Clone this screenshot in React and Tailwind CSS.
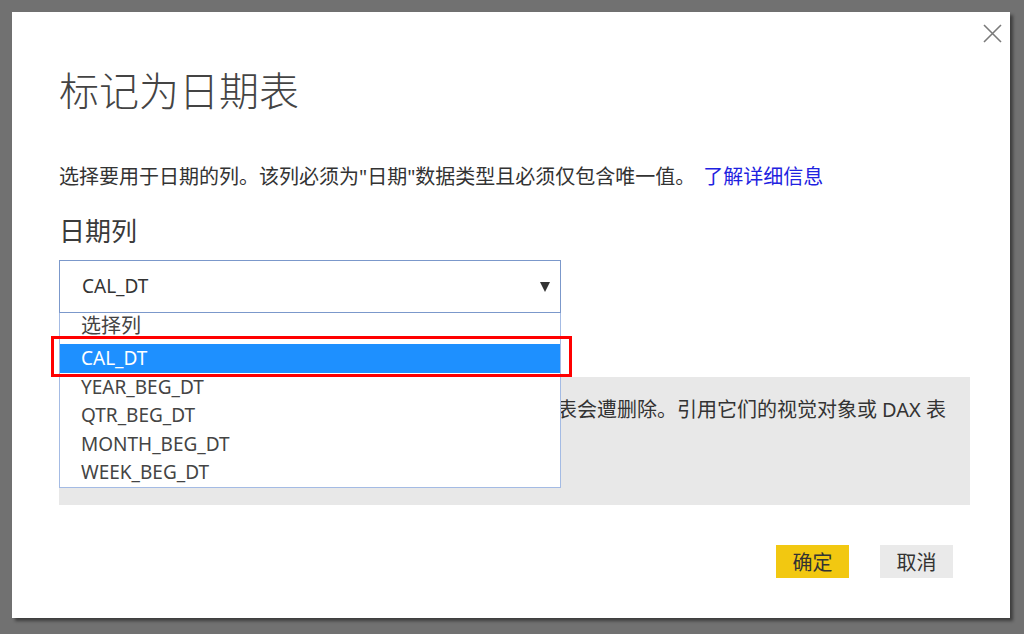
import React from "react";

const items = ["选择列", "CAL_DT", "YEAR_BEG_DT", "QTR_BEG_DT", "MONTH_BEG_DT", "WEEK_BEG_DT"];

function CloseIcon() {
  return (
    <svg width="19" height="19" viewBox="0 0 19 19" fill="none">
      <path d="M1 1L18 18M18 1L1 18" stroke="#7a7a7a" strokeWidth="1.6" />
    </svg>
  );
}

export default function App() {
  return (
    <div className="w-[1024px] h-[634px] bg-[#717171] pt-[12px] pl-[12px] overflow-hidden">
      <div className="relative w-[998px] h-[606px] bg-white shadow-[3px_3px_3px_rgba(0,0,0,0.45)] pl-[47px] pr-[40px] pt-[55px] text-[#333] font-['Noto_Sans','Noto_Sans_CJK_SC',sans-serif]">
        <button className="absolute right-[8px] top-[12px] w-[19px] h-[19px]">
          <CloseIcon />
        </button>

        <h1 className="text-[40px] leading-[48px] font-light text-[#444]">标记为日期表</h1>

        <p className="mt-[48px] text-[20px] leading-[28px] whitespace-nowrap">
          选择要用于日期的列。该列必须为"日期"数据类型且必须仅包含唯一值。
          <a className="ml-[8px] text-[#1e22e0]">了解详细信息</a>
        </p>

        <div className="mt-[23px] text-[26px] leading-[34px] text-[#3a3a3a]">日期列</div>

        <div className="relative mt-[12px] w-[502px] z-10">
          <div className="h-[53px] border border-[#7b98cb] flex items-center justify-between pl-[22px] pr-[10px] text-[19px]">
            <span>CAL_DT</span>
            <svg width="10" height="10" viewBox="0 0 10 10">
              <polygon points="0,0 10,0 5,10" fill="#333" />
            </svg>
          </div>
          <div className="absolute left-0 top-full w-[502px] border border-t-0 border-[#a4bbe4] bg-white">
            {items.map((it, i) => (
              <div
                key={it}
                className={
                  i === 0
                    ? "h-[31px] flex items-center pb-[5px] pl-[21px] text-[20px] text-[#444]"
                    : i === 1
                    ? "h-[28.5px] flex items-center pl-[21px] text-[19px] bg-[#1e90ff] text-white"
                    : "h-[28.5px] flex items-center pl-[21px] text-[19px] text-[#444]"
                }
              >
                {it}
              </div>
            ))}
          </div>
        </div>

        <div className="mt-[64px] h-[128px] w-[911px] bg-[#e8e8e8] pt-[19px] pr-[24px] text-[20px] leading-[28px]">
          <div className="flex justify-end whitespace-nowrap">
            表会遭删除。引用它们的视觉对象或 DAX 表
          </div>
        </div>

        <div className="mt-[40px] w-[911px] pr-[17px] flex justify-end gap-[31px] text-[20px]">
          <button className="w-[73px] h-[33px] bg-[#f2c811] text-[#333] pt-[2px]">确定</button>
          <button className="w-[73px] h-[33px] bg-[#eaeaea] text-[#333] pt-[2px]">取消</button>
        </div>

        <div className="absolute left-[39px] top-[324px] w-[521px] h-[41px] border-[3px] border-[#ff0000] z-20 pointer-events-none" />
      </div>
    </div>
  );
}
